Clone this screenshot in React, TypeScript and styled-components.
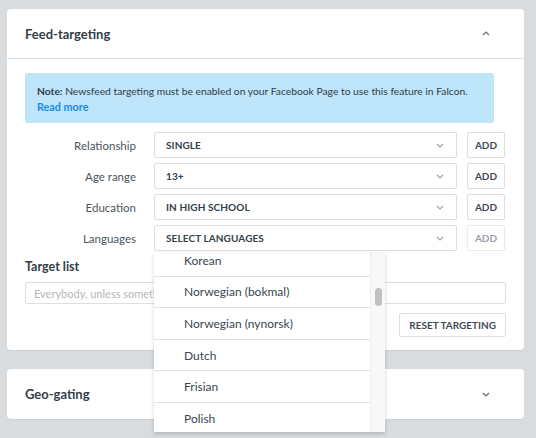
import { createGlobalStyle, styled } from 'styled-components';

const GlobalStyle = createGlobalStyle`
  html, body {
    margin: 0;
    padding: 0;
    background: #d9dcdf;
    font-family: Lato, 'Open Sans', sans-serif;
    color: #3a4550;
  }
  * { box-sizing: border-box; }
`;

const rows = [
  { label: 'Relationship', value: 'SINGLE' },
  { label: 'Age range', value: '13+' },
  { label: 'Education', value: 'IN HIGH SCHOOL' },
  { label: 'Languages', value: 'SELECT LANGUAGES', open: true },
];

const languages = [
  'Korean',
  'Norwegian (bokmal)',
  'Norwegian (nynorsk)',
  'Dutch',
  'Frisian',
  'Polish',
];

const Chevron = ({ up, color = '#5b6670' }: { up?: boolean; color?: string }) => (
  <svg width="8" height="5" viewBox="0 0 8 5">
    <path
      d={up ? 'M1 4.2 L4 1.2 L7 4.2' : 'M1 1 L4 4 L7 1'}
      fill="none"
      stroke={color}
      strokeWidth="1.2"
    />
  </svg>
);

const App = () => (
  <Page>
    <GlobalStyle />
    <Card>
      <CardHeader $divider>
        <CardTitle>Feed-targeting</CardTitle>
        <Chevron up />
      </CardHeader>
      <CardBody>
        <Note>
          <b>Note:</b> Newsfeed targeting must be enabled on your Facebook Page to use this feature in
          Falcon.
          <br />
          <ReadMore>Read more</ReadMore>
        </Note>
        <Rows>
          {rows.map((r) => (
            <Row key={r.label}>
              <Label>{r.label}</Label>
              <SelectWrap>
                <Select>
                  <span>{r.value}</span>
                  <Chevron color="#9aa3ab" />
                </Select>
                {r.open && (
                  <Dropdown>
                    <OptionList>
                      {languages.map((l) => (
                        <Option key={l}>{l}</Option>
                      ))}
                    </OptionList>
                    <ScrollTrack>
                      <ScrollThumb />
                    </ScrollTrack>
                  </Dropdown>
                )}
              </SelectWrap>
              <AddButton $disabled={r.open}>ADD</AddButton>
            </Row>
          ))}
        </Rows>
        <SectionLabel>Target list</SectionLabel>
        <TextInput placeholder="Everybody, unless something is selected" />
        <Actions>
          <OutlineButton>RESET TARGETING</OutlineButton>
        </Actions>
      </CardBody>
    </Card>
    <Card>
      <CardHeader>
        <CardTitle>Geo-gating</CardTitle>
        <Chevron />
      </CardHeader>
    </Card>
  </Page>
);

const Page = styled.div`
  min-height: 438px;
  padding: 9px 12px 19px 7px;
  display: flex;
  flex-direction: column;
  gap: 19px;
`;

const Card = styled.div`
  background: #fff;
  border-radius: 4px;
  box-shadow: 0 1px 1px rgba(0, 0, 0, 0.05);
`;

const CardHeader = styled.div<{ $divider?: boolean }>`
  height: 50px;
  display: flex;
  align-items: center;
  justify-content: space-between;
  padding: 0 34px 0 18px;
  border-bottom: ${(p) => (p.$divider ? '1px solid #dcdfe2' : 'none')};
`;

const CardTitle = styled.h3`
  margin: 0;
  font-size: 13px;
  font-weight: 700;
  color: #333e48;
`;

const CardBody = styled.div`
  padding: 14px 18px 13px 18px;
`;

const Note = styled.div`
  margin-right: 12px;
  background: #bfe5fb;
  border-radius: 2px;
  padding: 10px 12px 8px;
  font-size: 10.3px;
  line-height: 16px;
  white-space: nowrap;
  color: #2f3c48;

  b {
    font-weight: 700;
  }
`;

const ReadMore = styled.a`
  color: #168ee6;
  font-size: 10.8px;
  font-weight: 700;
  cursor: pointer;
`;

const Rows = styled.div`
  margin-top: 9px;
  display: flex;
  flex-direction: column;
  gap: 5px;
`;

const Row = styled.div`
  display: flex;
  align-items: center;
  gap: 10px;
`;

const Label = styled.div`
  width: 111px;
  margin-right: 8px;
  text-align: right;
  font-size: 11.5px;
  color: #4a5560;
`;

const SelectWrap = styled.div`
  position: relative;
  width: 303px;
`;

const Select = styled.div`
  height: 26px;
  border: 1px solid #dcdfe2;
  border-radius: 2px;
  display: flex;
  align-items: center;
  justify-content: space-between;
  padding: 0 12px 0 11px;
  font-size: 10px;
  font-weight: 700;
  letter-spacing: 0.1px;
  color: #333e48;
`;

const AddButton = styled.button<{ $disabled?: boolean }>`
  width: 38px;
  height: 26px;
  padding: 0;
  background: #fff;
  border: 1px solid ${(p) => (p.$disabled ? '#e8eaec' : '#dcdfe2')};
  border-radius: 2px;
  font-family: inherit;
  font-size: 10px;
  font-weight: 700;
  color: ${(p) => (p.$disabled ? '#9aa3ab' : '#3f4a55')};
`;

const Dropdown = styled.div`
  position: absolute;
  top: calc(100% + 1px);
  left: 0;
  width: 231px;
  height: 180px;
  background: #fff;
  box-shadow: 0 2px 4px rgba(0, 0, 0, 0.18);
  display: flex;
  overflow: hidden;
  z-index: 5;
`;

const OptionList = styled.div`
  flex: 1;
  margin-top: -7px;
`;

const Option = styled.div`
  height: 31.6px;
  flex-shrink: 0;
  display: flex;
  align-items: center;
  padding-left: 30px;
  font-size: 12px;
  color: #3a4550;
  border-bottom: 1px solid #dfe2e5;
`;

const ScrollTrack = styled.div`
  width: 15px;
  background: #f8f8f8;
  border-left: 1px solid #eeeeee;
  position: relative;
`;

const ScrollThumb = styled.div`
  position: absolute;
  top: 36px;
  left: 4px;
  width: 7px;
  height: 18px;
  border-radius: 4px;
  background: #c1c1c1;
`;

const SectionLabel = styled.div`
  margin-top: 8px;
  font-size: 12.5px;
  font-weight: 700;
  color: #333e48;
`;

const TextInput = styled.input`
  display: block;
  width: 100%;
  height: 22px;
  margin-top: 8px;
  border: 1px solid #dcdfe2;
  border-radius: 2px;
  padding: 0 8px;
  font-family: inherit;
  font-size: 11px;
  color: #3a4550;

  &::placeholder {
    color: #b3b8bd;
  }
`;

const Actions = styled.div`
  display: flex;
  justify-content: flex-end;
  margin-top: 9px;
`;

const OutlineButton = styled.button`
  height: 24px;
  padding: 0 9px;
  background: #fff;
  border: 1px solid #dcdfe2;
  border-radius: 2px;
  font-family: inherit;
  font-size: 10px;
  font-weight: 700;
  color: #3f4a55;
`;

export default App;
